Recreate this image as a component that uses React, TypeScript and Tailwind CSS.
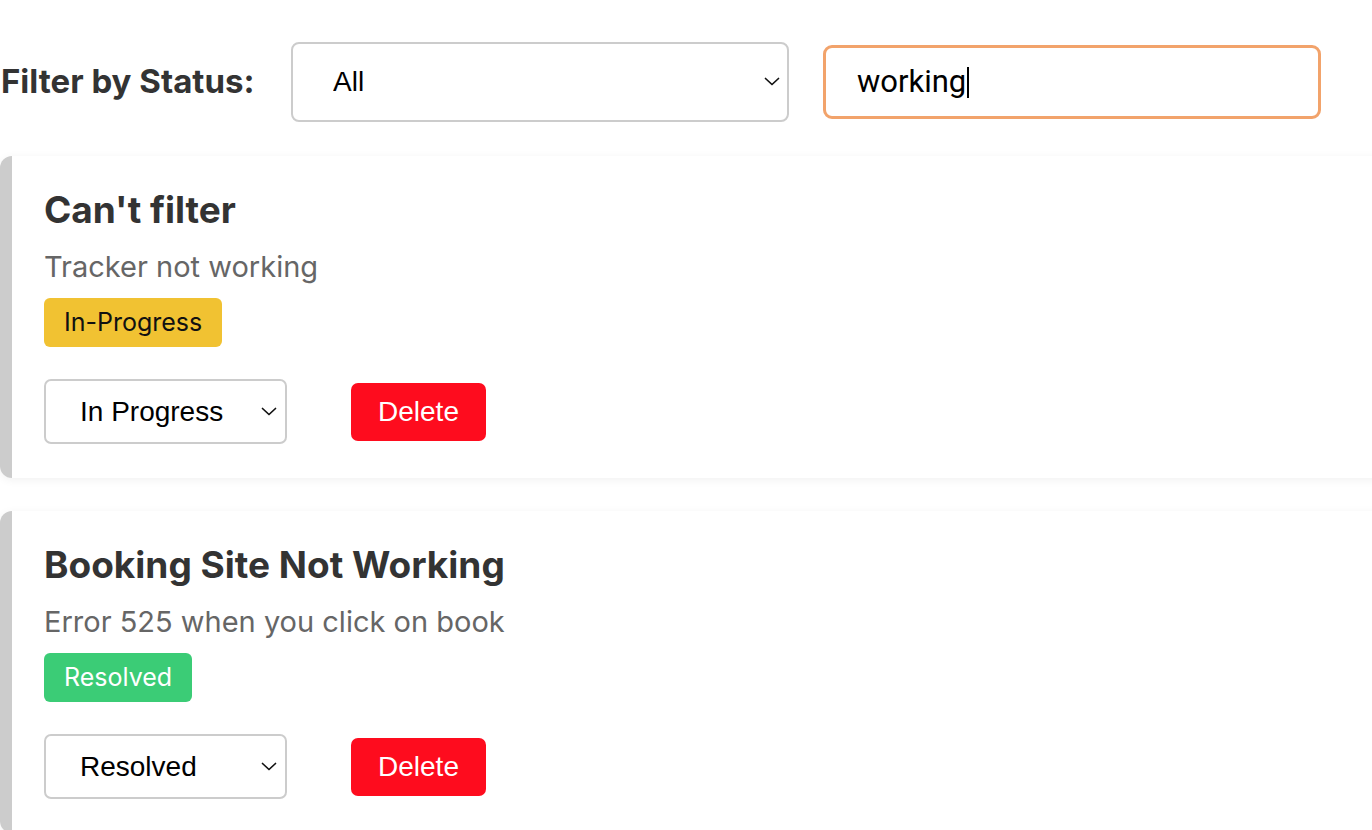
import React from "react";

type Ticket = {
  id: number;
  title: string;
  description: string;
  status: "In-Progress" | "Resolved";
};

const TICKETS: Ticket[] = [
  { id: 1, title: "Can't filter", description: "Tracker not working", status: "In-Progress" },
  {
    id: 2,
    title: "Booking Site Not Working",
    description: "Error 525 when you click on book",
    status: "Resolved",
  },
];

function Chevron({ className }: { className: string }) {
  return (
    <svg
      className={className}
      width="16"
      height="9"
      viewBox="0 0 16 9"
      fill="none"
      stroke="#111"
      strokeWidth="1.7"
      strokeLinecap="round"
      strokeLinejoin="round"
    >
      <path d="M1.5 1.5 L8 7.5 L14.5 1.5" />
    </svg>
  );
}

function TicketCard({ ticket }: { ticket: Ticket }) {
  const badge =
    ticket.status === "Resolved"
      ? "bg-[#3bcc76] text-white"
      : "bg-[#f1c232] text-[#111]";
  const selectLabel = ticket.status === "Resolved" ? "Resolved" : "In Progress";

  return (
    <div className="rounded-[12px] border-l-[12px] border-[#cccccc] bg-white pl-[32px] pt-[32px] pb-[34px] shadow-[0_2px_10px_rgba(0,0,0,0.06)]">
      <h2 className="font-['Inter',sans-serif] text-[37px] leading-[44px] font-bold text-[#333]">
        {ticket.title}
      </h2>
      <p className="mt-[17px] font-['Inter',sans-serif] text-[29px] leading-[36px] text-[#666]">
        {ticket.description}
      </p>
      <span
        className={`mt-[13px] inline-flex h-[49px] items-center rounded-[6px] px-[20px] font-['Inter',sans-serif] text-[25px] ${badge}`}
      >
        {ticket.status}
      </span>
      <div className="mt-[32px] flex items-center gap-[64px]">
        <div className="relative">
          <select
            defaultValue={selectLabel}
            className="h-[65px] w-[243px] appearance-none rounded-[7px] border-2 border-[#cccccc] bg-white pl-[34px] font-['Liberation_Sans',Arial,sans-serif] text-[28px] text-black outline-none"
          >
            <option>Open</option>
            <option>In Progress</option>
            <option>Resolved</option>
          </select>
          <Chevron className="pointer-events-none absolute right-[10px] top-[28px]" />
        </div>
        <button className="h-[58px] w-[135px] rounded-[7px] bg-[#fe0c1e] font-['Liberation_Sans',Arial,sans-serif] text-[28px] text-white">
          Delete
        </button>
      </div>
    </div>
  );
}

export default function App() {
  return (
    <div className="min-h-screen w-full overflow-hidden bg-white">
      <div className="flex items-center pt-[42px]">
        <label className="w-[291px] pl-[1px] font-['Inter',sans-serif] text-[33px] font-bold text-[#333]">
          Filter by Status:
        </label>
        <div className="relative">
          <select
            defaultValue="All"
            className="h-[80px] w-[498px] appearance-none rounded-[8px] border-2 border-[#cccccc] bg-white pl-[40px] font-['Liberation_Sans',Arial,sans-serif] text-[28px] text-black outline-none"
          >
            <option>All</option>
            <option>Open</option>
            <option>In Progress</option>
            <option>Resolved</option>
          </select>
          <Chevron className="pointer-events-none absolute right-[9px] top-[35px]" />
        </div>
        <div className="ml-[34px] flex h-[74px] w-[498px] items-center rounded-[9px] border-[3px] border-[#f2a36b] bg-white pl-[31px] font-['Roboto',sans-serif] text-[31px] text-black">
          <span>working</span>
          <span className="ml-[1px] h-[31px] w-[2px] bg-black" />
        </div>
      </div>

      <div className="mt-[34px] flex w-[1400px] flex-col gap-[33px]">
        {TICKETS.map((t) => (
          <TicketCard key={t.id} ticket={t} />
        ))}
      </div>
    </div>
  );
}
